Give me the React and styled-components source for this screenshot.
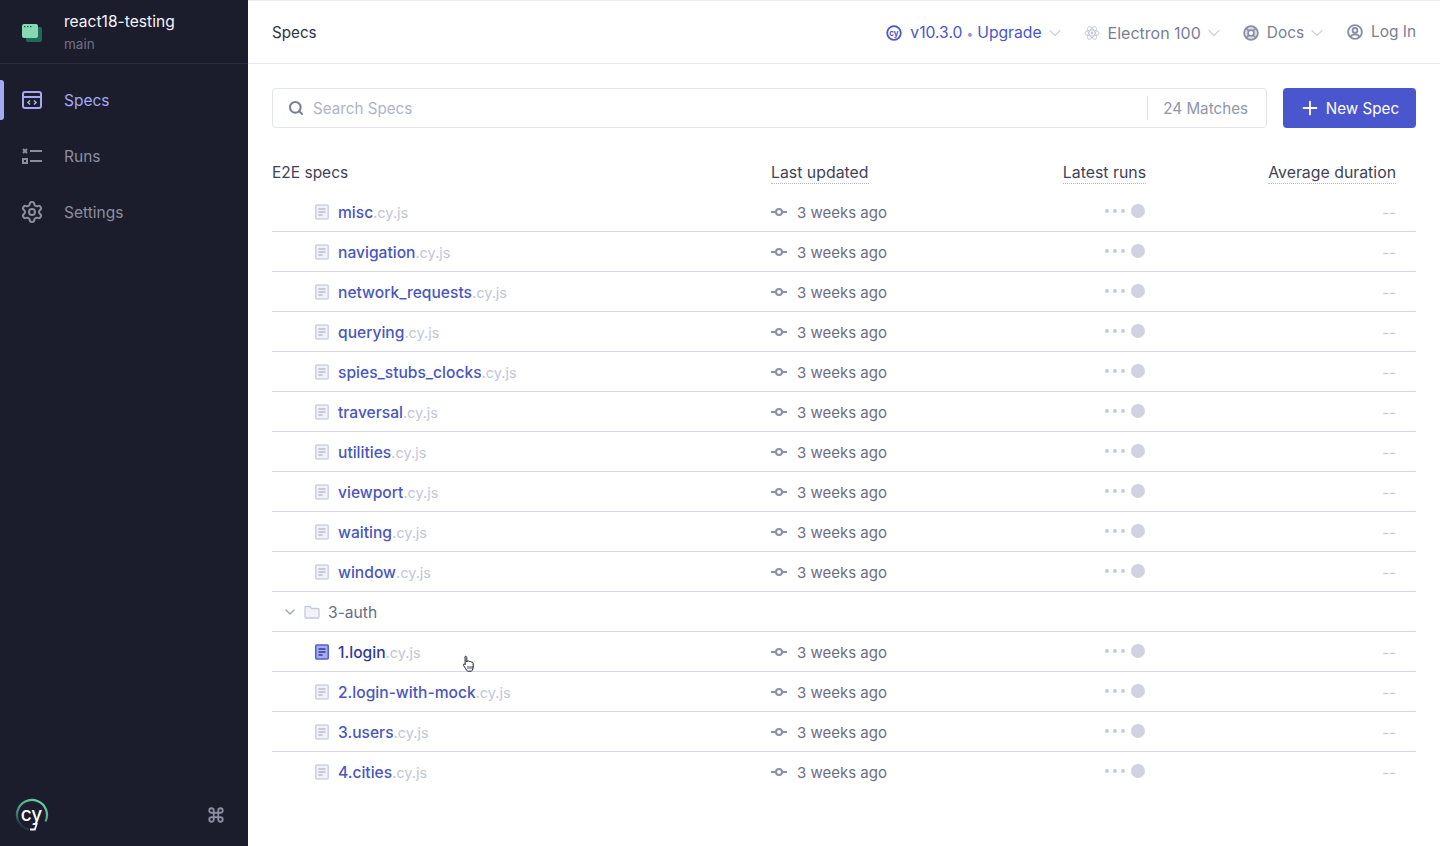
import styled, { createGlobalStyle } from "styled-components";
import { ChevronDown, Search, Plus, Settings, Command } from "lucide-react";

const GlobalStyle = createGlobalStyle`
  html, body {
    margin: 0;
    padding: 0;
    height: 100%;
    background: #1b1e2e;
    font-family: Inter, "Liberation Sans", sans-serif;
    overflow: hidden;
  }
  * { box-sizing: border-box; }
`;

const Page = styled.div`
  position: relative;
  display: flex;
  width: 1440px;
  height: 846px;
  background: #1b1e2e;
`;

const Sidebar = styled.aside`
  width: 248px;
  flex-shrink: 0;
  display: flex;
  flex-direction: column;
  background: #1b1d2d;
`;

const Project = styled.div`
  height: 64px;
  display: flex;
  align-items: center;
  gap: 22px;
  padding-left: 22px;
  border-bottom: 1px solid #2a2d3e;
`;

const ProjectText = styled.div`
  display: flex;
  flex-direction: column;
  gap: 3px;
  padding-top: 2px;
`;

const ProjectName = styled.div`
  font-size: 15.6px;
  line-height: 20px;
  color: #f3f4fa;
`;

const Branch = styled.div`
  font-size: 13.5px;
  line-height: 18px;
  color: #6f7285;
`;

const Nav = styled.nav`
  display: flex;
  flex-direction: column;
  padding-top: 8px;
`;

const NavItem = styled.div`
  position: relative;
  height: 56px;
  display: flex;
  align-items: center;
  gap: 22px;
  padding-left: 22px;
  font-size: 15.5px;
  color: ${(p) => (p.$active ? "#a5aaf0" : "#8b8e9f")};
  svg { flex-shrink: 0; }
  svg.gear { margin: -2px; }
`;

const ActiveMark = styled.span`
  position: absolute;
  left: 0;
  top: 8px;
  width: 4px;
  height: 40px;
  border-radius: 0 3px 3px 0;
  background: #a5aaf0;
`;

const SidebarFoot = styled.div`
  margin-top: auto;
  height: 62px;
  display: flex;
  align-items: center;
  justify-content: space-between;
  padding: 0 23px 0 15px;
  color: #8b8e9f;
`;

const Main = styled.main`
  flex: 1;
  display: flex;
  flex-direction: column;
  background: #fff;
  border-top: 1px solid #ececf2;
`;

const Header = styled.header`
  height: 63px;
  flex-shrink: 0;
  display: flex;
  align-items: center;
  justify-content: space-between;
  padding: 1px 24px 0;
  border-bottom: 1px solid #e6e8f2;
`;

const Title = styled.div`
  font-size: 15.2px;
  color: #2e3247;
`;

const HeaderNav = styled.div`
  display: flex;
  align-items: center;
  gap: 24px;
`;

const HeaderItem = styled.div`
  display: flex;
  align-items: center;
  gap: 8px;
  font-size: ${(p) => (p.$accent ? "15.7px" : "15.4px")};
  margin-bottom: ${(p) => (p.$raised ? "2px" : "0")};
  margin-left: ${(p) => (p.$raised ? "1px" : "0")};
  color: ${(p) => (p.$accent ? "#4956c9" : "#7a7e94")};
  svg.chev { color: #d0d2e0; margin: 0 -5px; }
`;

const ElectronLabel = styled.span`
  font-size: 16px;
`;

const Dot = styled.span`
  color: #8f95dd;
  font-size: 12px;
  margin: 0 4px;
`;

const Content = styled.div`
  padding: 24px 24px 0;
`;

const SearchRow = styled.div`
  display: flex;
  gap: 16px;
  height: 40px;
`;

const SearchBox = styled.div`
  flex: 1;
  display: flex;
  align-items: center;
  padding: 0 18px 0 15px;
  border: 1px solid #e1e3ed;
  border-radius: 4px;
  font-size: 15.2px;
  color: #afb3c7;
  gap: 9px;
  svg { color: #7a7e94; }
`;

const Placeholder = styled.span`
  flex: 1;
`;

const Matches = styled.span`
  height: 24px;
  line-height: 25px;
  padding-left: 15px;
  border-left: 1px solid #e1e3ed;
  color: #9095ad;
`;

const NewButton = styled.button`
  width: 133px;
  display: flex;
  align-items: center;
  justify-content: center;
  gap: 5px;
  background: #4956ce;
  color: #fff;
  border: none;
  border-radius: 4px;
  font: inherit;
  font-size: 15.2px;
  padding: 0 1px 0 0;
`;

const TableHead = styled.div`
  display: grid;
  grid-template-columns: 499px 200px 175px 1fr;
  align-items: center;
  height: 64px;
  padding: 24px 20px 0 0;
  font-size: 15.5px;
  color: #3f4357;
`;

const HeadHint = styled.span`
  justify-self: ${(p) => p.$align || "start"};
  margin-top: 2px;
  border-bottom: 1px dotted #b4b7c9;
  line-height: 21px;
  font-size: 15.85px;
`;

const Row = styled.div`
  display: grid;
  grid-template-columns: 499px 200px 175px 1fr;
  align-items: center;
  height: 40px;
  padding-right: 20px;
  border-bottom: 1px solid ${(p) => (p.$last ? "transparent" : "#d5d7e4")};
  font-size: 15px;
`;

const FileCell = styled.div`
  display: flex;
  align-items: center;
  gap: 8px;
  padding-left: 42px;
`;

const FolderCell = styled.div`
  display: flex;
  align-items: center;
  gap: 6px;
  padding-left: 10px;
  font-size: 15.6px;
  color: #6a6e84;
  svg.chev { color: #a0a4b8; }
  svg.folder { margin-right: 2px; }
`;

const CellText = styled.span`
  padding-top: 2px;
`;

const FileName = styled(CellText)`
  color: ${(p) => (p.$hover ? "#2f3a9e" : "#4956c0")};
  font-weight: 500;
  font-size: 15.6px;
`;

const Ext = styled.span`
  color: #c3c6d6;
  font-weight: 400;
  font-size: 14.5px;
`;

const Updated = styled.div`
  display: flex;
  align-items: center;
  gap: 10px;
  color: #6a6e84;
`;

const Runs = styled.div`
  justify-self: end;
  margin: 0 1px 1px 0;
  display: flex;
  align-items: center;
  gap: 4px;
`;

const SmallDot = styled.span`
  width: 4px;
  height: 4px;
  border-radius: 50%;
  background: #c8cada;
`;

const BigDot = styled.span`
  width: 14px;
  height: 14px;
  margin-left: 2px;
  border-radius: 50%;
  background: #d0d2e2;
`;

const Duration = styled(CellText)`
  justify-self: end;
  color: #c3c6d6;
`;

const CursorMark = styled.svg`
  position: absolute;
  left: 462px;
  top: 655px;
`;

const specs = [
  "misc",
  "navigation",
  "network_requests",
  "querying",
  "spies_stubs_clocks",
  "traversal",
  "utilities",
  "viewport",
  "waiting",
  "window",
];

const authSpecs = ["1.login", "2.login-with-mock", "3.users", "4.cities"];

function ProjectIcon() {
  return (
    <svg width="20" height="20" viewBox="0 0 20 20">
      <rect x="4" y="5" width="16" height="15" rx="2" fill="#1f6b5a" />
      <rect x="0" y="2" width="16" height="14" rx="2" fill="#86d9b0" />
      <rect x="2" y="4" width="1.5" height="1.2" fill="#1f5c4c" />
      <rect x="5" y="4" width="1.5" height="1.2" fill="#1f5c4c" />
      <rect x="8" y="4" width="1.5" height="1.2" fill="#1f5c4c" />
    </svg>
  );
}

function SpecsIcon() {
  return (
    <svg width="20" height="20" viewBox="0 0 20 20" fill="none" stroke="currentColor" strokeWidth="2">
      <rect x="1" y="2" width="18" height="16" rx="2" />
      <path d="M1 7h18" />
      <path d="M8 10.5 6 12.5l2 2M12 10.5l2 2-2 2" strokeWidth="1.6" />
    </svg>
  );
}

function RunsIcon() {
  return (
    <svg width="20" height="20" viewBox="0 0 20 20" fill="none" stroke="currentColor" strokeWidth="2">
      <path d="M1 3l4 4M5 3 1 7" />
      <rect x="1" y="13" width="4" height="4" />
      <path d="M8 5h12M8 15h12" />
    </svg>
  );
}

function CypressLogo() {
  return (
    <svg width="34" height="34" viewBox="0 0 34 34" fill="none">
      <defs>
        <linearGradient id="ring" x1="0.8" y1="0" x2="0.2" y2="1">
          <stop offset="0" stopColor="#69d3a7" />
          <stop offset="0.65" stopColor="#3f8f78" />
          <stop offset="1" stopColor="#1b1d2d" />
        </linearGradient>
      </defs>
      <path d="M14 31.7A15 15 0 1 1 30.5 23.5" stroke="url(#ring)" strokeWidth="2.2" />
      <text x="16.5" y="22.5" textAnchor="middle" fontFamily="Inter, sans-serif" fontSize="19" fontWeight="500" fill="#fff">
        cy
      </text>
      <path d="M22 25 19.8 31.5H15" stroke="#f3f4fa" strokeWidth="1.8" />
    </svg>
  );
}

function VersionIcon() {
  return (
    <svg width="16" height="16" viewBox="0 0 16 16" fill="none">
      <circle cx="8" cy="8" r="6.8" stroke="#4956c9" strokeWidth="1.8" />
      <text x="8" y="11" textAnchor="middle" fontFamily="Inter, sans-serif" fontSize="8" fontWeight="700" fill="#4956c9">
        cy
      </text>
    </svg>
  );
}

function ElectronIcon() {
  return (
    <svg width="16" height="16" viewBox="0 0 16 16" fill="none" stroke="#c6c8d6" strokeWidth="1">
      <ellipse cx="8" cy="8" rx="7" ry="3" />
      <ellipse cx="8" cy="8" rx="7" ry="3" transform="rotate(60 8 8)" />
      <ellipse cx="8" cy="8" rx="7" ry="3" transform="rotate(120 8 8)" />
      <circle cx="8" cy="8" r="1" fill="#c6c8d6" />
    </svg>
  );
}

function DocsIcon() {
  return (
    <svg width="16" height="16" viewBox="0 0 16 16" fill="none" stroke="#8b8fa5" strokeWidth="1.7">
      <circle cx="8" cy="8" r="6.9" fill="#d9dbe5" />
      <circle cx="8" cy="8" r="2.9" fill="#fff" />
      <path d="M3.2 3.2l2.8 2.8M12.8 3.2 10 6M3.2 12.8 6 10M12.8 12.8 10 10" />
    </svg>
  );
}

function UserIcon() {
  return (
    <svg width="16" height="16" viewBox="0 0 16 16" fill="none" stroke="#8b8fa5" strokeWidth="1.9">
      <circle cx="8" cy="8" r="6.9" />
      <circle cx="8" cy="6.4" r="2.4" />
      <path d="M3.6 12.8c1-1.8 2.6-2.4 4.4-2.4s3.4.6 4.4 2.4" />
    </svg>
  );
}

function DocIcon({ active }) {
  return (
    <svg width="16" height="16" viewBox="0 0 16 16">
      <rect
        x="1.75"
        y="1"
        width="12.5"
        height="14"
        rx="1"
        fill={active ? "#a9aeea" : "#f0f1f7"}
        stroke={active ? "#5560d2" : "#d0d3e2"}
        strokeWidth="1.6"
      />
      <path
        d="M4.5 5h7M4.5 8h7M4.5 11h4"
        stroke={active ? "#2f3a9e" : "#b9bccd"}
        strokeWidth="1.3"
        fill="none"
      />
    </svg>
  );
}

function FolderIcon() {
  return (
    <svg className="folder" width="16" height="14" viewBox="0 0 16 14" fill="#f2f3f8" stroke="#c6c9da" strokeWidth="1.3">
      <path d="M1 2.5A1 1 0 0 1 2 1.5h4l1.5 2H14a1 1 0 0 1 1 1v7.5a1 1 0 0 1-1 1H2a1 1 0 0 1-1-1z" />
    </svg>
  );
}

function CommitIcon() {
  return (
    <svg width="16" height="10" viewBox="0 0 16 10" fill="none" stroke="#8b8fa5" strokeWidth="2">
      <circle cx="8" cy="5" r="3" />
      <path d="M0 5h5M11 5h5" />
    </svg>
  );
}

function HandCursor() {
  return (
    <CursorMark width="14" height="18" viewBox="0 0 14 18">
      <path
        d="M3 1.5c.8-.6 1.8 0 1.8 1V7l.4-1c.8-.5 1.6-.2 1.8.6.8-.6 1.8-.2 2 .6.8-.5 1.8 0 2 .9.4 2 .4 4 0 5.4-.3 1.2-.8 2-1.6 2.7H5.6C4.4 15 3 13 1.6 10.4c-.5-1 .2-1.7 1.2-1.2l.4.5z"
        fill="#fff"
        stroke="#1b1e2e"
        strokeWidth="1"
      />
      <path d="M6 11v3M8 11v3M10 11v3" stroke="#1b1e2e" strokeWidth="0.8" />
    </CursorMark>
  );
}

function RunDots() {
  return (
    <Runs>
      <SmallDot />
      <SmallDot />
      <SmallDot />
      <BigDot />
    </Runs>
  );
}

function SpecRow({ name, last, hover }) {
  return (
    <Row $last={last}>
      <FileCell>
        <DocIcon active={hover} />
        <FileName $hover={hover}>
          {name}
          <Ext>.cy.js</Ext>
        </FileName>
      </FileCell>
      <Updated>
        <CommitIcon />
        <CellText>3 weeks ago</CellText>
      </Updated>
      <RunDots />
      <Duration>--</Duration>
    </Row>
  );
}

export default function App() {
  return (
    <Page>
      <GlobalStyle />
      <Sidebar>
        <Project>
          <ProjectIcon />
          <ProjectText>
            <ProjectName>react18-testing</ProjectName>
            <Branch>main</Branch>
          </ProjectText>
        </Project>
        <Nav>
          <NavItem $active>
            <ActiveMark />
            <SpecsIcon />
            Specs
          </NavItem>
          <NavItem>
            <RunsIcon />
            Runs
          </NavItem>
          <NavItem>
            <Settings className="gear" size={24} />
            Settings
          </NavItem>
        </Nav>
        <SidebarFoot>
          <CypressLogo />
          <Command size={18} strokeWidth={2.4} />
        </SidebarFoot>
      </Sidebar>
      <Main>
        <Header>
          <Title>Specs</Title>
          <HeaderNav>
            <HeaderItem $accent>
              <VersionIcon />
              <span>
                v10.3.0<Dot>•</Dot>Upgrade
              </span>
              <ChevronDown className="chev" size={20} strokeWidth={1.5} />
            </HeaderItem>
            <HeaderItem>
              <ElectronIcon />
              <ElectronLabel>Electron 100</ElectronLabel>
              <ChevronDown className="chev" size={20} strokeWidth={1.5} />
            </HeaderItem>
            <HeaderItem>
              <DocsIcon />
              Docs
              <ChevronDown className="chev" size={20} strokeWidth={1.5} />
            </HeaderItem>
            <HeaderItem $raised>
              <UserIcon />
              Log In
            </HeaderItem>
          </HeaderNav>
        </Header>
        <Content>
          <SearchRow>
            <SearchBox>
              <Search size={16} strokeWidth={3} />
              <Placeholder>Search Specs</Placeholder>
              <Matches>24 Matches</Matches>
            </SearchBox>
            <NewButton>
              <Plus size={22} />
              New Spec
            </NewButton>
          </SearchRow>
          <TableHead>
            <span>E2E specs</span>
            <HeadHint>Last updated</HeadHint>
            <HeadHint $align="end">Latest runs</HeadHint>
            <HeadHint $align="end">Average duration</HeadHint>
          </TableHead>
          {specs.map((name) => (
            <SpecRow key={name} name={name} />
          ))}
          <Row>
            <FolderCell>
              <ChevronDown className="chev" size={16} />
              <FolderIcon />
              <CellText>3-auth</CellText>
            </FolderCell>
          </Row>
          {authSpecs.map((name, i) => (
            <SpecRow key={name} name={name} hover={i === 0} last={i === authSpecs.length - 1} />
          ))}
        </Content>
      </Main>
      <HandCursor />
    </Page>
  );
}
